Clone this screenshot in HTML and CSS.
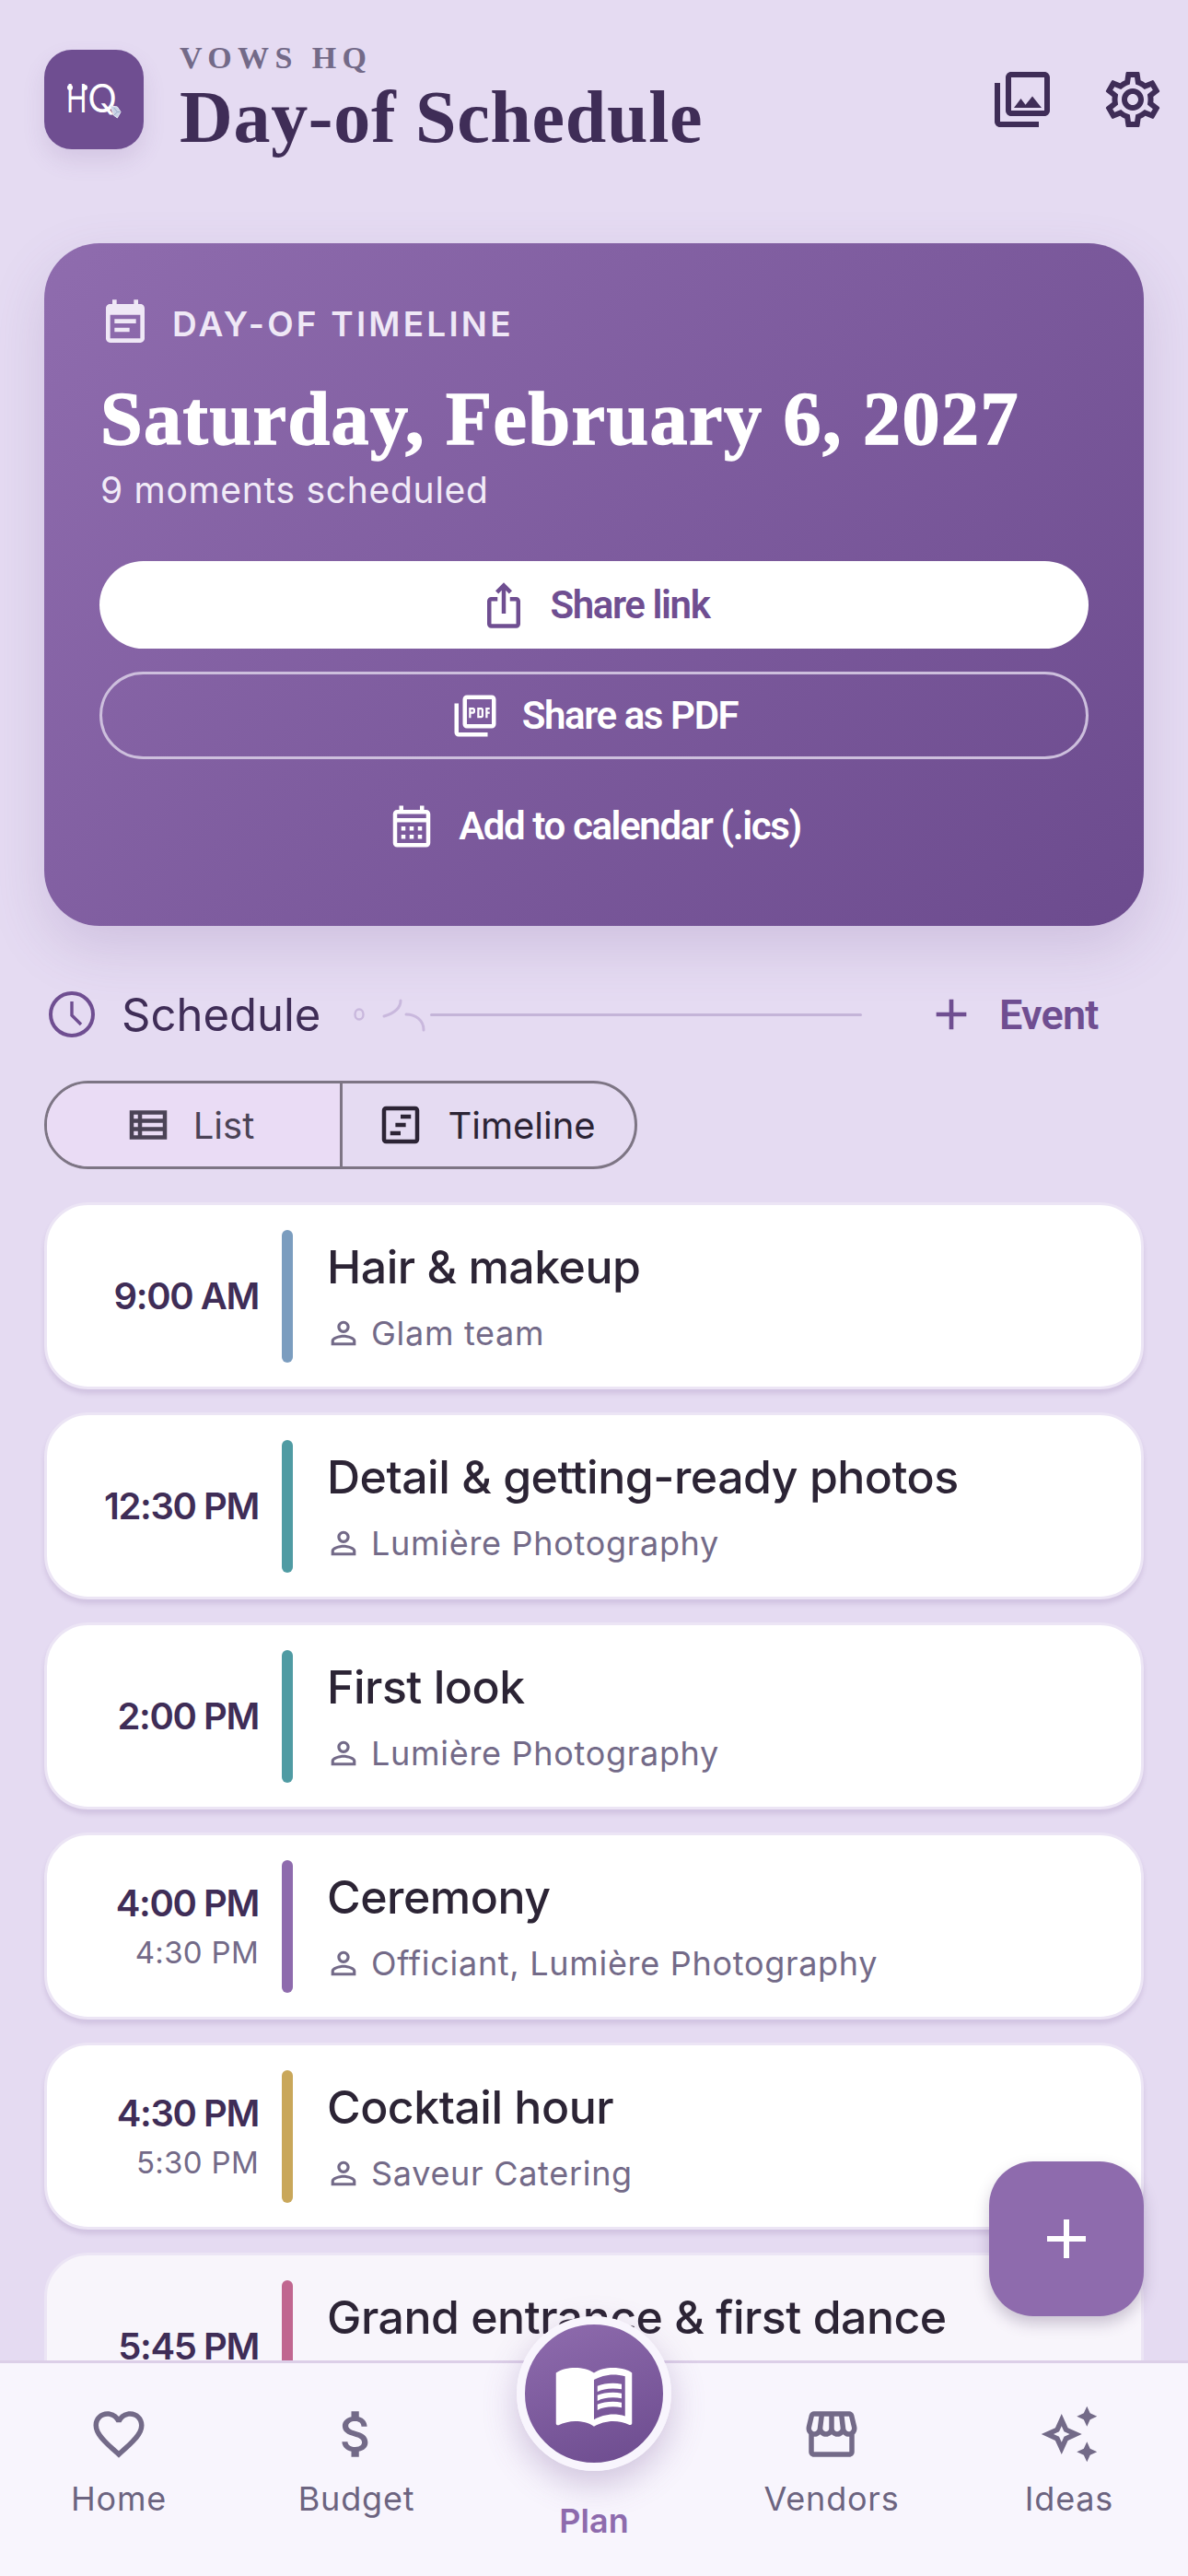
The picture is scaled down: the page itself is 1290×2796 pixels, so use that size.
FILE: index.html
```html
<!DOCTYPE html>
<html lang="en">
<head>
<meta charset="utf-8">
<title>Day-of Schedule</title>
<link rel="stylesheet" href="styles.css">
</head>
<body>
<div class="screen">
  <main class="content">
    <header class="topbar">
      <div class="logo"><span class="logo-text"><span class="logo-h">H</span>Q</span>
        <i class="logo-dot logo-dot-a"></i><i class="logo-dot logo-dot-b"></i>
        <svg class="logo-gem" viewBox="0 0 14 16"><path d="M1 1l8 1 4 6-4 7-4-3z" fill="#c9d3e6" stroke="#eef2f8" stroke-width="1"/><path d="M5 3l4 5-4 4M9 8l4 0" fill="none" stroke="#8fa0c0" stroke-width=".8"/></svg>
      </div>
      <div class="brand">
        <div class="eyebrow">VOWS HQ</div>
        <h1 class="page-title">Day-of Schedule</h1>
      </div>
      <div class="top-actions">
        <svg class="icon-72" viewBox="0 0 24 24"><path d="M20 4v12H8V4h12m0-2H8c-1.1 0-2 .9-2 2v12c0 1.1.9 2 2 2h12c1.1 0 2-.9 2-2V4c0-1.1-.9-2-2-2zm-8.5 9.67l1.69 2.26 2.48-3.1L19 15H9zM2 6v14c0 1.1.9 2 2 2h14v-2H4V6H2z"/></svg>
        <svg class="icon-72" viewBox="0 0 24 24"><path d="M19.43 12.98c.04-.32.07-.64.07-.98 0-.34-.03-.66-.07-.98l2.11-1.65c.19-.15.24-.42.12-.64l-2-3.46c-.09-.16-.26-.25-.44-.25-.06 0-.12.01-.17.03l-2.49 1c-.52-.4-1.08-.73-1.69-.98l-.38-2.65C14.46 2.18 14.25 2 14 2h-4c-.25 0-.46.18-.49.42l-.38 2.65c-.61.25-1.17.59-1.69.98l-2.49-1c-.06-.02-.12-.03-.18-.03-.17 0-.34.09-.43.25l-2 3.46c-.13.22-.07.49.12.64l2.11 1.65c-.04.32-.07.65-.07.98 0 .33.03.66.07.98l-2.11 1.65c-.19.15-.24.42-.12.64l2 3.46c.09.16.26.25.44.25.06 0 .12-.01.17-.03l2.49-1c.52.4 1.08.73 1.69.98l.38 2.65c.03.24.24.42.49.42h4c.25 0 .46-.18.49-.42l.38-2.65c.61-.25 1.17-.59 1.69-.98l2.49 1c.06.02.12.03.18.03.17 0 .34-.09.43-.25l2-3.46c.12-.22.07-.49-.12-.64l-2.11-1.65zm-1.98-1.71c.04.31.05.52.05.73 0 .21-.02.43-.05.73l-.14 1.13.89.7 1.08.84-.7 1.21-1.27-.51-1.04-.42-.9.68c-.43.32-.84.56-1.25.73l-1.06.43-.16 1.13-.2 1.35h-1.4l-.19-1.35-.16-1.13-1.06-.43c-.43-.18-.83-.41-1.23-.71l-.91-.7-1.06.43-1.27.51-.7-1.21 1.08-.84.89-.7-.14-1.13c-.03-.31-.05-.54-.05-.74s.02-.43.05-.73l.14-1.13-.89-.7-1.08-.84.7-1.21 1.27.51 1.04.42.9-.68c.43-.32.84-.56 1.25-.73l1.06-.43.16-1.13.2-1.35h1.39l.19 1.35.16 1.13 1.06.43c.43.18.83.41 1.23.71l.91.7 1.06-.43 1.27-.51.7 1.21-1.07.85-.89.7.14 1.13zM12 8c-2.21 0-4 1.79-4 4s1.79 4 4 4 4-1.79 4-4-1.79-4-4-4zm0 6c-1.1 0-2-.9-2-2s.9-2 2-2 2 .9 2 2-.9 2-2 2z"/></svg>
      </div>
    </header>

    <section class="hero">
      <div class="hero-head">
        <svg class="icon-56" viewBox="0 0 24 24"><path d="M17 10H7v2h10v-2zm2-7h-1V1h-2v2H8V1H6v2H5c-1.11 0-1.99.9-1.99 2L3 19c0 1.1.89 2 2 2h14c1.1 0 2-.9 2-2V5c0-1.1-.9-2-2-2zm0 16H5V8h14v11zm-5-5H7v2h7v-2z"/></svg>
        <span class="hero-kicker">DAY-OF TIMELINE</span>
      </div>
      <h2 class="hero-date">Saturday, February 6, 2027</h2>
      <p class="hero-sub">9 moments scheduled</p>
      <div class="hero-buttons">
        <button class="btn btn-white"><svg class="icon-54" viewBox="0 0 24 24"><path d="M16 5l-1.42 1.42-1.59-1.59V16h-1.98V4.83L9.42 6.42 8 5l4-4 4 4zm4 5v11c0 1.1-.9 2-2 2H6c-1.11 0-2-.9-2-2V10c0-1.11.89-2 2-2h3v2H6v11h12V10h-3V8h3c1.1 0 2 .89 2 2z"/></svg>Share link</button>
        <button class="btn btn-outline"><svg class="icon-54" viewBox="0 0 24 24"><path d="M20 2H8c-1.1 0-2 .9-2 2v12c0 1.1.9 2 2 2h12c1.1 0 2-.9 2-2V4c0-1.1-.9-2-2-2zm0 14H8V4h12v12zM4 6H2v14c0 1.1.9 2 2 2h14v-2H4V6zm12 6V9c0-.55-.45-1-1-1h-2v5h2c.55 0 1-.45 1-1zm-2-3h1v3h-1V9zm4 2h1v-1h-1V9h1V8h-2v5h1v-2zm-8 0h1c.55 0 1-.45 1-1V9c0-.55-.45-1-1-1H9v5h1v-2zm0-2h1v1h-1V9z"/></svg>Share as PDF</button>
        <button class="btn btn-text"><svg class="icon-54" viewBox="0 0 24 24"><path d="M19 4h-1V2h-2v2H8V2H6v2H5c-1.1 0-2 .9-2 2v14c0 1.1.9 2 2 2h14c1.1 0 2-.9 2-2V6c0-1.1-.9-2-2-2zm0 16H5V10h14v10zm0-12H5V6h14v2zM9 14H7v-2h2v2zm4 0h-2v-2h2v2zm4 0h-2v-2h2v2zm-8 4H7v-2h2v2zm4 0h-2v-2h2v2zm4 0h-2v-2h2v2z"/></svg>Add to calendar (.ics)</button>
      </div>
    </section>

    <div class="section-head">
      <svg class="clock" viewBox="0 0 60 60"><circle cx="30" cy="30" r="23" fill="none" stroke-width="4"/><path d="M30 16v15l10 10" fill="none" stroke-width="3.4"/></svg>
      <span class="section-title">Schedule</span>
      <svg class="flourish" viewBox="0 0 84 40"><ellipse cx="9" cy="20" rx="4.5" ry="5.5" fill="none" stroke-width="2.4"/><path d="M36 22c10-3 18-8 18-17M60 20c10 0 19 6 19 17" fill="none" stroke-width="3" stroke-linecap="round"/></svg>
      <span class="section-rule"></span>
      <button class="add-event"><svg class="icon-48" viewBox="0 0 24 24"><path d="M19 13h-6v6h-2v-6H5v-2h6V5h2v6h6v2z"/></svg>Event</button>
    </div>

    <div class="segments">
      <div class="segment segment-on"><svg class="icon-54" viewBox="0 0 24 24"><path d="M3 5v14h18V5H3zm4 12H5v-2h2v2zm0-4H5v-2h2v2zm0-4H5V7h2v2zm12 8H9v-2h10v2zm0-4H9v-2h10v2zm0-4H9V7h10v2z"/></svg>List</div>
      <div class="segment"><svg class="icon-54" viewBox="0 0 24 24"><path d="M19 3H5c-1.1 0-2 .9-2 2v14c0 1.1.9 2 2 2h14c1.1 0 2-.9 2-2V5c0-1.1-.9-2-2-2zm0 16H5V5h14v14zM12 7h5v2h-5zM9.5 11h5v2h-5zM7 15h5v2H7z"/></svg>Timeline</div>
    </div>

    <ul class="moments">
      <li class="moment">
        <div class="times"><span class="t-start">9:00 AM</span></div>
        <span class="stripe stripe-blue"></span>
        <div class="moment-body"><div class="moment-title">Hair &amp; makeup</div>
          <div class="moment-who"><svg class="icon-40" viewBox="0 0 24 24"><path d="M12 5.9c1.16 0 2.1.94 2.1 2.1s-.94 2.1-2.1 2.1S9.9 9.16 9.9 8s.94-2.1 2.1-2.1m0 9c2.97 0 6.1 1.46 6.1 2.1v1.1H5.9V17c0-.64 3.13-2.1 6.1-2.1M12 4C9.79 4 8 5.79 8 8s1.79 4 4 4 4-1.79 4-4-1.79-4-4-4zm0 9c-2.67 0-8 1.34-8 4v3h16v-3c0-2.66-5.33-4-8-4z"/></svg>Glam team</div></div>
      </li>
      <li class="moment">
        <div class="times"><span class="t-start">12:30 PM</span></div>
        <span class="stripe stripe-teal"></span>
        <div class="moment-body"><div class="moment-title">Detail &amp; getting-ready photos</div>
          <div class="moment-who"><svg class="icon-40" viewBox="0 0 24 24"><path d="M12 5.9c1.16 0 2.1.94 2.1 2.1s-.94 2.1-2.1 2.1S9.9 9.16 9.9 8s.94-2.1 2.1-2.1m0 9c2.97 0 6.1 1.46 6.1 2.1v1.1H5.9V17c0-.64 3.13-2.1 6.1-2.1M12 4C9.79 4 8 5.79 8 8s1.79 4 4 4 4-1.79 4-4-1.79-4-4-4zm0 9c-2.67 0-8 1.34-8 4v3h16v-3c0-2.66-5.33-4-8-4z"/></svg>Lumière Photography</div></div>
      </li>
      <li class="moment">
        <div class="times"><span class="t-start">2:00 PM</span></div>
        <span class="stripe stripe-teal"></span>
        <div class="moment-body"><div class="moment-title">First look</div>
          <div class="moment-who"><svg class="icon-40" viewBox="0 0 24 24"><path d="M12 5.9c1.16 0 2.1.94 2.1 2.1s-.94 2.1-2.1 2.1S9.9 9.16 9.9 8s.94-2.1 2.1-2.1m0 9c2.97 0 6.1 1.46 6.1 2.1v1.1H5.9V17c0-.64 3.13-2.1 6.1-2.1M12 4C9.79 4 8 5.79 8 8s1.79 4 4 4 4-1.79 4-4-1.79-4-4-4zm0 9c-2.67 0-8 1.34-8 4v3h16v-3c0-2.66-5.33-4-8-4z"/></svg>Lumière Photography</div></div>
      </li>
      <li class="moment">
        <div class="times"><span class="t-start">4:00 PM</span><span class="t-end">4:30 PM</span></div>
        <span class="stripe stripe-purple"></span>
        <div class="moment-body"><div class="moment-title">Ceremony</div>
          <div class="moment-who"><svg class="icon-40" viewBox="0 0 24 24"><path d="M12 5.9c1.16 0 2.1.94 2.1 2.1s-.94 2.1-2.1 2.1S9.9 9.16 9.9 8s.94-2.1 2.1-2.1m0 9c2.97 0 6.1 1.46 6.1 2.1v1.1H5.9V17c0-.64 3.13-2.1 6.1-2.1M12 4C9.79 4 8 5.79 8 8s1.79 4 4 4 4-1.79 4-4-1.79-4-4-4zm0 9c-2.67 0-8 1.34-8 4v3h16v-3c0-2.66-5.33-4-8-4z"/></svg>Officiant, Lumière Photography</div></div>
      </li>
      <li class="moment">
        <div class="times"><span class="t-start">4:30 PM</span><span class="t-end">5:30 PM</span></div>
        <span class="stripe stripe-gold"></span>
        <div class="moment-body"><div class="moment-title">Cocktail hour</div>
          <div class="moment-who"><svg class="icon-40" viewBox="0 0 24 24"><path d="M12 5.9c1.16 0 2.1.94 2.1 2.1s-.94 2.1-2.1 2.1S9.9 9.16 9.9 8s.94-2.1 2.1-2.1m0 9c2.97 0 6.1 1.46 6.1 2.1v1.1H5.9V17c0-.64 3.13-2.1 6.1-2.1M12 4C9.79 4 8 5.79 8 8s1.79 4 4 4 4-1.79 4-4-1.79-4-4-4zm0 9c-2.67 0-8 1.34-8 4v3h16v-3c0-2.66-5.33-4-8-4z"/></svg>Saveur Catering</div></div>
      </li>
      <li class="moment moment-fade">
        <div class="times"><span class="t-start">5:45 PM</span></div>
        <span class="stripe stripe-rose"></span>
        <div class="moment-body"><div class="moment-title">Grand entrance &amp; first dance</div>
          <div class="moment-who"></div></div>
      </li>
    </ul>
  </main>

  <button class="fab"><svg class="icon-72w" viewBox="0 0 24 24"><path d="M19 13h-6v6h-2v-6H5v-2h6V5h2v6h6v2z"/></svg></button>

  <nav class="tabbar">
    <div class="tab"><svg class="tab-icon" viewBox="0 0 24 24"><path d="M16.5 3c-1.74 0-3.41.81-4.5 2.09C10.91 3.81 9.24 3 7.5 3 4.42 3 2 5.42 2 8.5c0 3.78 3.4 6.86 8.55 11.54L12 21.35l1.45-1.32C18.6 15.36 22 12.28 22 8.5 22 5.42 19.58 3 16.5 3zm-4.4 15.55l-.1.1-.1-.1C7.14 14.24 4 11.39 4 8.5 4 6.5 5.5 5 7.5 5c1.54 0 3.04.99 3.57 2.36h1.87C13.46 5.99 14.96 5 16.5 5c2 0 3.5 1.5 3.5 3.5 0 2.89-3.14 5.74-7.9 10.05z"/></svg><span>Home</span></div>
    <div class="tab"><svg class="tab-icon" viewBox="0 0 24 24"><path d="M11.8 10.9c-2.27-.59-3-1.2-3-2.15 0-1.09 1.01-1.85 2.7-1.85 1.78 0 2.44.85 2.5 2.1h2.21c-.07-1.72-1.12-3.3-3.21-3.81V3h-3v2.16c-1.94.42-3.5 1.68-3.5 3.61 0 2.31 1.91 3.46 4.7 4.13 2.5.6 3 1.48 3 2.41 0 .69-.49 1.79-2.7 1.79-2.06 0-2.87-.92-2.98-2.1h-2.2c.12 2.19 1.76 3.42 3.68 3.83V21h3v-2.15c1.95-.37 3.5-1.5 3.5-3.55 0-2.84-2.43-3.81-4.7-4.4z"/></svg><span>Budget</span></div>
    <div class="tab tab-on">
      <div class="plan-circle"><svg class="plan-icon" viewBox="0 0 24 24"><path d="M21 5c-1.11-.35-2.33-.5-3.5-.5-1.95 0-4.05.4-5.5 1.5-1.45-1.1-3.55-1.5-5.5-1.5S2.45 4.9 1 6v14.65c0 .25.25.5.5.5.1 0 .15-.05.25-.05C3.1 20.45 5.05 20 6.5 20c1.95 0 4.05.4 5.5 1.5 1.35-.85 3.8-1.5 5.5-1.5 1.65 0 3.35.3 4.75 1.05.1.05.15.05.25.05.25 0 .5-.25.5-.5V6c-.6-.45-1.25-.75-2-1zm0 13.5c-1.1-.35-2.3-.5-3.5-.5-1.7 0-4.15.65-5.5 1.5V8c1.35-.85 3.8-1.5 5.5-1.5 1.2 0 2.4.15 3.5.5v11.5zM17.5 10.5c.88 0 1.73.09 2.5.26V9.24c-.79-.15-1.64-.24-2.5-.24-1.7 0-3.24.29-4.5.83v1.66c1.13-.64 2.7-.99 4.5-.99zM13 12.49v1.66c1.13-.64 2.7-.99 4.5-.99.88 0 1.73.09 2.5.26V11.9c-.79-.15-1.64-.24-2.5-.24-1.7 0-3.24.3-4.5.83zM17.5 14.33c-1.7 0-3.24.29-4.5.83v1.66c1.13-.64 2.7-.99 4.5-.99.88 0 1.73.09 2.5.26v-1.52c-.79-.16-1.64-.24-2.5-.24z"/></svg></div>
      <span>Plan</span>
    </div>
    <div class="tab"><svg class="tab-icon" viewBox="0 0 24 24"><path d="M21.9 8.89l-1.05-4.37c-.22-.9-1-1.52-1.91-1.52H5.05c-.9 0-1.69.63-1.9 1.52L2.1 8.89c-.24 1.02-.02 2.06.62 2.88.08.11.19.19.28.29V19c0 1.1.9 2 2 2h14c1.1 0 2-.9 2-2v-6.94c.09-.09.2-.18.28-.28.64-.82.87-1.87.62-2.89zm-2.99-3.9l1.05 4.37c.1.42.01.84-.25 1.17-.14.18-.44.47-.94.47-.61 0-1.14-.49-1.21-1.14L16.98 5l1.93-.01zM13 5h1.96l.54 4.52c.05.39-.07.78-.33 1.07-.22.26-.54.41-.95.41-.67 0-1.22-.59-1.22-1.31V5zM8.49 9.52L9.04 5H11v4.69c0 .72-.55 1.31-1.29 1.31-.34 0-.65-.15-.89-.41-.25-.29-.37-.68-.33-1.07zm-4.45-.16L5.05 5h1.97l-.58 4.86c-.08.65-.6 1.14-1.21 1.14-.49 0-.8-.29-.93-.47-.27-.32-.36-.75-.26-1.17zM5 19v-6.03c.08.01.15.03.23.03.87 0 1.66-.36 2.24-.95.6.6 1.4.95 2.31.95.87 0 1.65-.36 2.23-.93.59.57 1.39.93 2.29.93.84 0 1.64-.35 2.24-.95.58.59 1.37.95 2.24.95.08 0 .15-.02.23-.03V19H5z"/></svg><span>Vendors</span></div>
    <div class="tab"><svg class="tab-icon" viewBox="0 0 24 24"><path d="M19 9l1.25-2.75L23 5l-2.75-1.25L19 1l-1.25 2.75L15 5l2.75 1.25L19 9zm0 6l-1.25 2.75L15 19l2.75 1.25L19 23l1.25-2.75L23 19l-2.75-1.25L19 15zM11.5 9.5L9 4 6.5 9.5 1 12l5.5 2.5L9 20l2.5-5.5L17 12l-5.5-2.5zm-1.51 3.49L9 15.17l-.99-2.18L5.83 12l2.18-.99L9 8.83l.99 2.18 2.18.99-2.18.99z"/></svg><span>Ideas</span></div>
  </nav>
</div>
</body>
</html>
```
FILE: styles.css
```css
* { box-sizing: border-box; }
html, body { margin: 0; padding: 0; }
body { font-family: "Inter", "Noto Sans", sans-serif; background: #e5dbf2; }
button { font: inherit; border: 0; background: none; padding: 0; }
h1, h2, p, ul { margin: 0; padding: 0; }
li { list-style: none; }
svg { display: block; flex: none; fill: currentColor; }

.screen { position: relative; width: 1290px; height: 2796px; display: flex; flex-direction: column; overflow: hidden; background: #e5dbf2; }
.content { flex: 1; min-height: 0; overflow: hidden; padding: 54px 48px 0; }

.topbar { display: flex; align-items: center; height: 108px; margin-right: -24px; }
.logo { position: relative; width: 108px; height: 108px; border-radius: 30px; background: #6f4e91; box-shadow: 0 12px 24px rgba(111, 78, 145, .14); display: flex; align-items: center; justify-content: center; flex: none; }
.logo-text { color: #fff; font-weight: 400; font-size: 42px; line-height: 1; margin: 0 0 2px -5px; display: flex; }
.logo-h { display: block; width: 23px; transform: scaleX(.72); transform-origin: 0 50%; }
.logo-dot { position: absolute; top: 38px; width: 6px; height: 6px; border-radius: 50%; background: #fff; }
.logo-dot-a { left: 25px; }
.logo-dot-b { left: 41px; }
.logo-gem { position: absolute; left: 71px; top: 60px; width: 13px; height: 15px; }
.brand { flex: 1; margin: -11px 0 0 39px; min-width: 0; align-self: flex-start; }
.eyebrow { font-family: "Liberation Serif", serif; font-weight: 700; font-size: 34px; line-height: 40px; letter-spacing: 6.4px; color: #736a88; }
.page-title { font-family: "Liberation Serif", serif; font-weight: 700; font-size: 80px; line-height: 84px; letter-spacing: .7px; color: #3f2d57; margin-top: 2px; }
.top-actions { display: flex; gap: 48px; color: #3f2d57; }
.icon-72 { width: 72px; height: 72px; }

.hero { margin-top: 102px; height: 741px; border-radius: 60px; padding: 59px 60px 0; background: linear-gradient(135deg, #8f6cae 0%, #6c4b8e 100%); box-shadow: 0 24px 60px rgba(111, 78, 145, .18); color: #fff; }
.hero-head { display: flex; align-items: center; gap: 23px; height: 56px; color: #efe8f6; }
.icon-56 { width: 56px; height: 56px; }
.hero-kicker { font-size: 37px; font-weight: 600; letter-spacing: 3.2px; line-height: 1; }
.hero-date { font-family: "Liberation Serif", serif; font-weight: 700; font-size: 82px; line-height: 90px; letter-spacing: 1.5px; margin: 31px 0 0 1px; -webkit-text-stroke: 1.4px #fff; white-space: nowrap; }
.hero-sub { font-size: 39px; line-height: 46px; letter-spacing: .7px; color: #f1ebf7; margin: 9px 0 0 1px; }
.hero-buttons { display: flex; flex-direction: column; gap: 25px; margin-top: 54px; }
.btn { height: 95px; border-radius: 48px; display: flex; align-items: center; justify-content: center; gap: 24px; font-family: "Roboto", sans-serif; font-weight: 600; font-size: 42px; letter-spacing: -1.4px; color: #fff; }
.icon-54 { width: 54px; height: 54px; }
.btn-white { background: #fff; color: #6f4e91; }
.btn-outline { border: 3px solid #cdbfdd; }
.btn-text { background: transparent; }

.section-head { display: flex; align-items: center; height: 84px; margin-top: 54px; }
.clock { width: 60px; height: 60px; color: #6f4e91; stroke: #6f4e91; }
.section-title { font-size: 49px; color: #3f2d57; margin-left: 24px; line-height: 1; width: 214px; flex: none; }
.flourish { width: 84px; height: 40px; margin-left: 35px; stroke: #c9b8dd; fill: none; }
.section-rule { width: 469px; height: 3px; background: #c4b4d8; margin-left: 2px; border-radius: 2px; }
.add-event { display: flex; align-items: center; gap: 24px; margin-left: 69px; color: #6f4e91; font-family: "Roboto", sans-serif; font-weight: 600; font-size: 45px; letter-spacing: -.8px; }
.icon-48 { width: 56px; height: 56px; }

.segments { display: flex; width: 644px; height: 96px; margin-top: 30px; border: 3px solid #7d7584; border-radius: 48px; overflow: hidden; }
.segment { display: flex; align-items: center; justify-content: center; gap: 24px; font-size: 40px; color: #2c2435; }
.segment:first-child { width: 321px; padding-right: 10px; gap: 22px; border-right: 3px solid #7d7584; background: #eadcf5; color: #4b4356; }
.segment:last-child { flex: 1; padding-right: 6px; }

.moments { display: flex; flex-direction: column; gap: 25px; margin-top: 36px; }
.moment { flex: none; display: flex; align-items: center; height: 203px; border-radius: 48px; background: #fff; border: 3px solid #ece5f5; box-shadow: 0 5px 5px rgba(111, 78, 145, .16); }
.moment-fade { background: #f8f5fb; box-shadow: none; }
.times { width: 230px; display: flex; flex-direction: column; align-items: flex-end; gap: 8px; }
.t-start { font-weight: 600; font-size: 40px; line-height: 48px; letter-spacing: -1.4px; color: #3f2d57; }
.t-end { font-size: 33px; line-height: 42px; letter-spacing: .3px; color: #736a88; }
.stripe { width: 12px; height: 144px; border-radius: 6px; margin-left: 25px; flex: none; }
.stripe-blue { background: #7b9dbf; }
.stripe-teal { background: #4f9ba3; }
.stripe-purple { background: #8e6bad; }
.stripe-gold { background: #c9a75a; }
.stripe-rose { background: #c0668f; }
.moment-body { margin-left: 37px; min-width: 0; }
.moment-title { font-weight: 500; font-size: 50px; line-height: 64px; letter-spacing: -.5px; color: #2c2435; white-space: nowrap; }
.moment-who { display: flex; align-items: center; gap: 10px; margin-top: 17px; min-height: 46px; font-size: 36px; line-height: 46px; letter-spacing: .7px; color: #736a88; }
.icon-40 { width: 40px; height: 40px; margin-left: -2px; }

.fab { position: absolute; left: 1074px; top: 2346px; width: 168px; height: 168px; border-radius: 48px; background: #8e6bad; color: #fff; display: flex; align-items: center; justify-content: center; box-shadow: 0 8px 16px rgba(63, 45, 87, .25); }
.icon-72w { width: 72px; height: 72px; }

.tabbar { flex: none; position: relative; height: 234px; display: grid; grid-template-columns: repeat(5, 258px); background: #f8f5fd; border-top: 3px solid #dccfe8; }
.tab { display: flex; flex-direction: column; align-items: center; padding-top: 44px; font-size: 36px; line-height: 46px; letter-spacing: .8px; color: #6c6480; }
.tab-icon { width: 66px; height: 66px; color: #736a88; margin-bottom: 14px; }
.tab-on { position: relative; padding-top: 148px; color: #8e6bad; font-weight: 600; letter-spacing: 0; }
.plan-circle { position: absolute; left: 45px; top: -51px; width: 168px; height: 168px; border-radius: 50%; border: 9px solid #f8f5fd; background: linear-gradient(160deg, #8f6cae, #6c4b8e); display: flex; align-items: center; justify-content: center; box-shadow: 0 14px 36px rgba(111, 78, 145, .3); color: #fff; }
.plan-icon { width: 90px; height: 90px; }
```
